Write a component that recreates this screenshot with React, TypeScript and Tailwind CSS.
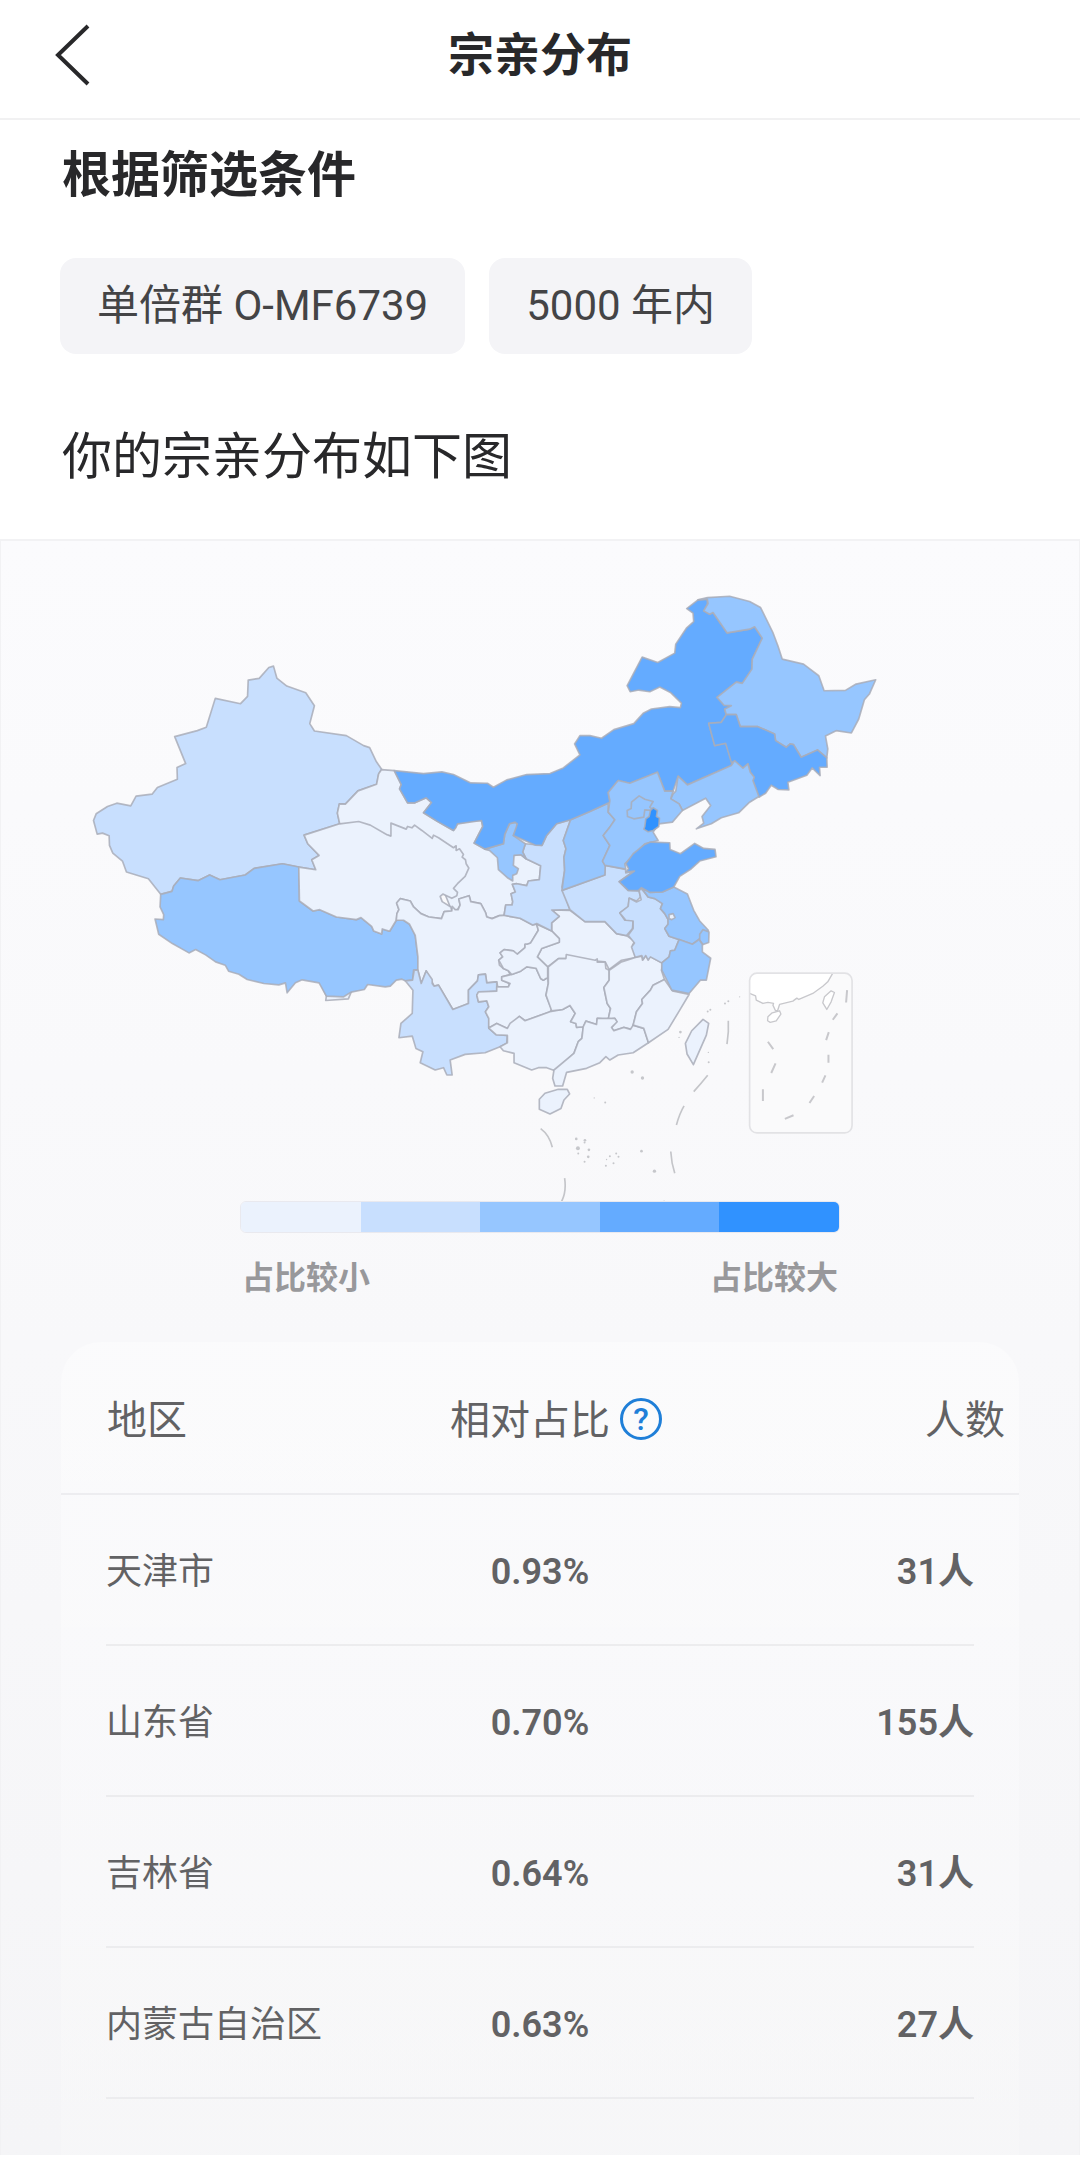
type Region = { name: string; fill: string; d: string };

const TINTS = ["#ebf2fd", "#c8dffe", "#96c6ff", "#64abff", "#3092ff"];

const WEST: Region[] = [
  {
    name: "新疆",
    fill: TINTS[1],
    d: "M38 510L46 490 80 468 108 458 150 466 166 437 214 431 230 411 290 386 289 351 315 339 282 258 350 240 377 230 404 143 480 159 501 137 503 88 536 83 565 50 579 46 589 82 619 106 676 126 702 165 688 219 702 241 798 255 850 285 868 291 888 333 904 356 895 370 889 401 833 421 795 461 777 460 771 488 778 520 671 554 682 580 716 615 694 628 706 658 655 650 606 640 521 654 494 674 418 688 387 674 352 691 299 683 279 707 274 723 240 732 203 685 137 665 125 632 96 608 86 585 85 556 65 548 49 551Z",
  },
  { name: "border", fill: TINTS[0], d: "M720 1000L738 1038 736 1051 804 1046 815 1020Z" },
  {
    name: "西藏",
    fill: TINTS[2],
    d: "M240 732L274 723 279 707 299 683 352 691 387 674 418 688 494 674 521 654 606 640 655 650 657 752 698 782 718 778 768 800 828 808 842 802 874 828 880 842 904 851 906 836 928 843 948 810 970 810 988 822 1005 855 1013 920 1015 960 1000 960 997 990 975 992 965 987 948 990 930 1008 915 1010 862 1003 852 1018 812 1026 790 1040 738 1038 716 998 665 989 645 998 620 1028 615 998 595 1004 550 1000 500 988 475 972 444 963 434 945 405 935 375 914 345 898 325 908 275 880 234 852 223 806 248 808 249 793 238 770Z",
  },
];

const CENTRE: Region[] = [
  {
    name: "甘肃",
    fill: TINTS[0],
    d: "M-92 250L-99 218 -93 190 -75 191 -37 151 19 131 25 100 34 87 72 90 93 132 88 145 112 187 134 187 168 172 184 186 160 217 200 242 250 270 262 250 300 243 334 240 338 258 312 308 344 326 360 328 430 345 453 343 468 355 512 376 508 418 475 422 470 436 440 430 427 432 436 455 423 460 428 484 426 494 407 494 402 525 388 526 366 535 350 530 346 516 332 490 302 484 297 466 266 476 270 494 262 508 245 512 200 400 62 287Z",
  },
  {
    name: "青海",
    fill: TINTS[0],
    d: "M-92 250L-199 284 -188 310 -154 345 -176 358 -164 388 -215 380 -213 482 -172 512 -152 508 -102 530 -42 538 -28 532 4 558 10 572 34 581 36 566 58 573 78 540 80 520 86 508 79 488 90 475 120 482 130 500 152 520 176 530 214 535 222 514 245 512 242 500 216 484 210 468 218 461 245 474 260 466 262 456 250 444 262 430 285 408 296 383 288 370 286 358 276 350 280 342 268 325 258 330 258 316 250 322 205 292 190 284 186 294 155 270 133 254 125 262 112 258 108 266 62 248 62 287 50 283 0 254 -35 243Z",
  },
  {
    name: "四川",
    fill: TINTS[0],
    d: "M78 540L80 520 86 508 79 488 90 475 120 482 130 500 152 520 176 530 214 535 222 514 245 512 246 498 255 508 264 508 270 494 266 476 297 466 302 484 332 490 346 516 350 530 366 535 388 526 402 525 450 534 488 554 500 552 505 570 482 608 472 612 465 612 465 622 442 642 435 640 430 632 402 628 390 638 398 650 386 660 388 675 400 685 415 692 420 703 395 710 395 720 418 730 415 740 383 740 380 725 350 728 346 702 325 704 322 722 295 750 295 790 248 808 205 735 192 738 168 692 153 730 143 690 143 650 135 585 118 552 100 540Z",
  },
  {
    name: "云南",
    fill: TINTS[1],
    d: "M105 722L127 720 132 690 143 690 153 730 168 692 186 718 186 730 192 738 205 735 248 808 295 790 295 750 322 722 325 704 346 702 350 728 380 725 380 753 325 758 320 765 325 785 350 782 356 800 346 815 356 835 356 864 378 884 412 886 410 910 390 920 345 938 285 943 240 960 246 1005 230 1005 220 983 195 990 150 968 158 935 137 925 126 888 86 893 92 850 126 820 128 750Z",
  },
  {
    name: "贵州",
    fill: TINTS[0],
    d: "M425 703L452 693 470 680 498 684 512 715 520 720 533 712 535 730 528 765 545 808 540 815 465 842 448 829 412 865 380 850 356 864 356 835 346 815 356 800 350 782 325 785 320 765 325 755 380 753 380 740 415 740 420 730 395 720 395 710Z",
  },
  {
    name: "广西",
    fill: TINTS[0],
    d: "M356 864L380 850 412 865 420 850 448 829 465 842 540 815 578 808 600 796 616 820 602 845 618 850 620 862 640 860 636 895 625 905 612 940 555 992 530 983 505 983 485 990 432 968 432 940 400 932 390 920 412 908 412 886 378 884Z",
  },
  {
    name: "湖北",
    fill: TINTS[0],
    d: "M545 509L600 510 645 544 705 544 740 580 770 586 795 603 788 615 797 652 755 660 718 688 706 665 590 655 565 655 533 680 502 650 515 625 568 606 568 595 545 572 545 548 568 528Z",
  },
  {
    name: "重庆",
    fill: TINTS[0],
    d: "M500 552L545 572 568 595 568 606 515 625 502 650 533 680 533 712 520 720 512 715 498 684 470 680 452 693 425 703 415 692 400 685 386 660 398 650 390 638 402 628 430 632 442 642 465 622 465 612 472 612 482 608 505 570Z",
  },
  {
    name: "湖南",
    fill: TINTS[0],
    d: "M535 680L566 655 588 655 589 643 676 660 682 656 682 666 706 666 708 685 718 690 718 720 702 742 712 790 722 805 715 838 682 835 680 853 648 843 640 860 620 862 618 850 602 845 616 820 600 796 578 808 545 812 528 765 535 730Z",
  },
  {
    name: "江西",
    fill: TINTS[0],
    d: "M718 690L755 665 797 652 816 648 818 660 828 645 834 656 842 650 880 670 875 690 884 718 850 735 842 750 816 778 818 790 800 815 788 862 782 867 760 862 730 872 725 862 740 845 735 835 715 838 722 805 712 790 702 742 718 720Z",
  },
  {
    name: "广东",
    fill: TINTS[0],
    d: "M640 860L648 843 680 853 682 835 735 835 742 845 725 862 732 872 762 862 782 868 790 855 822 865 836 908 790 938 745 945 720 960 708 950 690 968 650 985 590 997 578 1038 555 1038 548 1015 552 990 612 940 625 905 636 895Z",
  },
  {
    name: "福建",
    fill: TINTS[0],
    d: "M884 718L908 752 958 763 930 810 895 868 836 908 822 865 790 855 800 815 818 790 816 778 842 750 850 735Z",
  },
  {
    name: "陕西",
    fill: TINTS[1],
    d: "M602 238L580 300 588 325 582 350 584 390 576 440 600 508 545 509 568 528 545 548 545 572 500 550 488 554 450 534 402 525 407 494 426 494 428 484 423 460 436 455 427 432 440 430 470 436 475 422 508 418 512 376 468 355 458 335 466 310 516 315 530 285 560 250Z",
  },
  {
    name: "河南",
    fill: TINTS[1],
    d: "M706 375L767 387 768 398 795 390 748 424 775 450 808 452 812 470 800 482 778 474 775 500 750 518 765 540 790 540 788 565 770 586 740 580 705 544 645 544 600 508 576 450 705 404Z",
  },
  {
    name: "山西",
    fill: TINTS[2],
    d: "M602 238L660 213 715 188 715 215 735 238 720 260 700 285 720 315 698 362 706 375 705 404 576 450 584 390 582 350 588 325 580 300Z",
  },
  {
    name: "宁夏",
    fill: TINTS[2],
    d: "M344 326L400 310 404 282 418 250 440 246 442 260 430 285 466 310 458 335 468 355 453 343 432 345 430 375 445 385 440 400 428 405 428 422 412 412 385 388 382 352 358 330Z",
  },
  {
    name: "内蒙古",
    fill: TINTS[3],
    d: "M72 90L160 99 215 94 250 102 302 127 352 128 370 140 410 118 470 102 540 99 580 82 630 43 614 10 630 -15 660 -15 695 -7 732 -33 792 -51 820 -82 845 -95 900 -102 932 -99 935 -113 902 -145 870 -161 840 -147 807 -152 781 -147 772 -165 817 -251 864 -235 915 -263 918 -290 950 -338 972 -358 970 -383 951 -397 985 -423 1013 -425 1013 -410 1002 -390 1020 -380 1030 -385 1072 -324 1140 -335 1155 -342 1178 -308 1148 -245 1147 -215 1118 -172 1100 -176 1042 -130 1070 -108 1090 -100 1065 -95 1070 -78 1055 -55 1017 -52 1035 15 1068 8 1088 65 1085 75 953 133 925 107 910 152 885 152 863 95 780 128 745 120 715 156 720 185 660 213 602 238 560 250 530 285 516 315 495 314 430 285 442 250 435 245 418 250 404 282 400 310 344 326 312 308 338 258 334 240 262 250 257 262 250 270 200 242 160 217 184 186 168 172 134 187 112 187 88 145 93 132Z",
  },
];

const NORTHEAST: Region[] = [
  {
    name: "黑龙江",
    fill: TINTS[2],
    d: "M325 57L353 50 420 46 480 62 513 80 550 155 565 195 578 235 642 250 688 285 704 330 768 329 800 310 859 297 840 340 825 357 808 415 786 457 740 450 708 466 715 505 712 532 684 508 635 530 612 492 602 490 590 500 558 480 555 460 505 438 452 438 440 402 410 402 405 385 425 375 403 374 382 350 440 304 458 308 487 265 488 235 518 172 495 138 480 145 412 156 370 95 360 100 342 90 355 68 353 55Z",
  },
  {
    name: "吉林",
    fill: TINTS[3],
    d: "M410 402L440 402 452 438 505 438 555 460 558 480 590 500 602 490 612 492 635 530 684 508 712 532 713 560 690 560 692 585 668 562 652 584 595 605 598 628 566 627 545 614 528 638 508 650 490 600 494 590 482 575 475 550 460 563 435 542 425 545 408 488 375 495 357 428 395 425Z",
  },
  {
    name: "辽宁",
    fill: TINTS[2],
    d: "M435 540L460 563 475 550 482 575 494 590 490 600 508 648 480 665 447 697 395 712 365 730 320 745 342 728 337 708 363 675 348 653 278 690 268 670 243 655 250 640 258 632 265 587 293 613 425 555Z",
  },
  {
    name: "河北",
    fill: TINTS[2],
    d: "M203 575L225 632 250 632 243 655 268 670 278 690 248 725 207 730 190 755 205 780 165 790 105 850 108 866 45 855 38 842 60 795 40 765 60 740 75 718 55 695 60 660 55 636 85 600 120 608Z",
  },
  { name: "北京", fill: TINTS[2], d: "M113 708L112 690 124 684 125 665 148 646 165 656 190 663 180 680 192 690 165 688 162 710 132 715Z" },
  { name: "天津", fill: TINTS[4], d: "M182 690L190 682 203 690 200 708 209 713 207 738 190 750 175 754 162 746 165 738 168 715 178 708Z" },
];

const EAST: Region[] = [
  {
    name: "安徽",
    fill: TINTS[1],
    d: "M313 275L325 290 345 295 368 310 362 325 375 340 385 358 385 372 375 385 388 408 418 418 405 450 392 452 388 470 366 488 332 470 325 480 318 466 310 478 306 466 286 471 275 440 284 428 265 405 280 385 280 362 258 360 240 338 265 318 268 293 290 305 304 298 298 272 303 264Z",
  },
  {
    name: "江苏",
    fill: TINTS[2],
    d: "M402 260L443 281 462 330 480 362 506 390 500 415 480 415 458 432 418 418 388 408 375 385 385 372 385 358 375 340 362 325 368 310 345 295 325 290 305 262 330 276 368 275Z",
  },
  { name: "lake", fill: TINTS[0], d: "M388 343L400 340 406 352 396 358 388 355Z" },
  { name: "上海", fill: TINTS[2], d: "M480 402L490 388 508 395 507 427 490 433 480 420Z" },
  {
    name: "浙江",
    fill: TINTS[2],
    d: "M418 418L458 432 478 418 488 433 488 455 513 474 500 540 482 540 448 580 396 570 366 510 366 488 388 470 392 452 405 450Z",
  },
  {
    name: "山东",
    fill: TINTS[3],
    d: "M332 125L390 127 391 147 422 160 465 129 492 144 526 147 529 169 480 182 455 205 420 228 402 260 368 275 330 276 305 262 295 271 265 270 238 244 284 212 258 215 266 205 258 190 280 160 315 132Z",
  },
];

const ISLANDS: Region[] = [
  { name: "台湾", fill: TINTS[0], d: "M670 358L687 370 680 405 641 494 622 462 617 430 636 392Z" },
  { name: "海南", fill: TINTS[0], d: "M235 568L262 568 269 582 252 600 243 626 210 642 178 628 178 598 195 580Z" },
];

const GROUPS: { at: string; regions: Region[] }[] = [
  { at: "translate(80 650) scale(0.33333)", regions: WEST },
  { at: "translate(370 740) scale(0.33333)", regions: CENTRE },
  { at: "translate(590 580) scale(0.33333)", regions: NORTHEAST },
  { at: "translate(540 800) scale(0.33333)", regions: EAST },
  { at: "translate(480 900) scale(0.33333)", regions: ISLANDS },
];

const ISLETS = [
  [229, 237, 4], [255, 241, 4], [254, 248, 3], [234, 265, 6], [267, 270, 4], [235, 281, 3], [265, 291, 4],
  [254, 306, 3], [330, 289, 3], [349, 281, 3], [356, 291, 3], [320, 299, 2], [341, 310, 3], [318, 318, 3],
  [425, 274, 4], [464, 334, 5], [283, 114, 2], [316, 128, 3], [397, 36, 5], [428, 54, 5], [493, 425, 3],
  [624, -146, 3], [632, -151, 3], [676, -170, 3], [686, -177, 3], [720, -190, 2], [542, -84, 4], [538, -68, 2],
  [626, -23, 2], [627, 7, 3],
];

function ChinaMap() {
  return (
    <svg viewBox="0 540 1080 661" className="block h-auto w-full" role="img" aria-label="宗亲分布">
      {GROUPS.map((g) => (
        <g key={g.at} transform={g.at} stroke="#a9adb9" strokeOpacity="0.85" strokeWidth="5" strokeLinejoin="round">
          {g.regions.map((r) => (
            <path key={r.name} d={r.d} fill={r.fill} />
          ))}
        </g>
      ))}
      <g transform="translate(500 1060) scale(0.33333)">
        <g fill="#c6c7cb">
          {ISLETS.map(([x, y, r]) => (
            <circle key={`${x}-${y}`} cx={x} cy={y} r={r} />
          ))}
        </g>
        <path
          d="M686 -118V-85L682 -48M624 46Q605 70 582 95M553 138Q540 160 530 195M122 206Q148 225 157 262M194 355Q200 395 185 425M513 275Q515 310 525 340"
          fill="none"
          stroke="#c4c5c9"
          strokeWidth="5"
        />
      </g>
      <g transform="translate(680 950) scale(0.33333)" strokeLinejoin="round">
        <rect x="210" y="69" width="308" height="480" rx="22" fill="#fafafb" />
        <g fill="#ffffff" stroke="#c8c8cc" strokeWidth="4">
          <path
            stroke="none"
            d="M210 130L228 137 230 150 250 160 282 160 280 165 288 182 294 182 300 163 340 153 352 144 362 146 400 130 430 108 460 69H232Q210 69 210 91Z"
          />
          <path
            fill="none"
            d="M210 130L228 137 230 150 250 160 265 157 282 160 280 165 288 182 294 182 300 163 340 153 352 144 358 148 400 130 430 108 445 95 460 69"
          />
          <path d="M265 200L278 188 300 182 304 192 290 212 272 217 264 212Z" />
          <path d="M455 122L465 127 455 155 442 178 430 158 435 140Z" />
        </g>
        <rect x="210" y="69" width="308" height="480" rx="22" fill="none" stroke="#e2e2e5" strokeWidth="5" />
        <path
          d="M503 120L500 157M474 190L460 209M448 246L440 270M447 314V338M438 376L428 398M404 438L390 459M342 496L316 507M265 275L281 297M288 340L275 369M250 418V453"
          fill="none"
          stroke="#c8c8cc"
          strokeWidth="6"
        />
      </g>
    </svg>
  );
}

const ROWS = [
  { area: "天津市", share: "0.93%", people: "31人" },
  { area: "山东省", share: "0.70%", people: "155人" },
  { area: "吉林省", share: "0.64%", people: "31人" },
  { area: "内蒙古自治区", share: "0.63%", people: "27人" },
];

export default function App() {
  return (
    <div className="bg-white pb-7 font-[Roboto,'Noto_Sans_CJK_SC',sans-serif] text-[#28282a]">
      <header className="grid h-[120px] grid-cols-[1fr_auto_1fr] items-center border-b-2 border-[#f1f1f2] px-[54px] pb-2">
        <button type="button" aria-label="返回" className="justify-self-start">
          <svg viewBox="0 0 36 62" className="h-[62px] w-9" fill="none" stroke="#28282a" strokeWidth="4">
            <path d="M34 2 4 31 34 60" />
          </svg>
        </button>
        <h1 className="text-[46px] leading-[60px] font-bold">宗亲分布</h1>
      </header>

      <section className="px-[60px] pt-[26px] pb-[52px]">
        <h2 className="px-0.5 text-[49px] leading-[60px] font-bold">根据筛选条件</h2>
        <div className="mt-[52px] flex gap-6 text-[42px] leading-[60px] text-[#444446]">
          <span className="rounded-2xl bg-[#f4f4f7] px-[37px] py-[18px]">单倍群 O-MF6739</span>
          <span className="rounded-2xl bg-[#f4f4f7] px-[37px] py-[18px]">5000 年内</span>
        </div>
        <p className="mt-[73px] px-0.5 text-[50px] leading-[60px]">你的宗亲分布如下图</p>
      </section>

      <section className="border-x border-t-2 border-[#f2f2f4] bg-linear-to-b from-[#fbfbfd] to-[#f5f5f7]">
        <ChinaMap />

        <div className="mx-auto w-[600px] max-w-full">
          <div className="flex h-8 overflow-hidden rounded-md border border-[#8080a020]">
            <span className="flex-1 bg-[#ebf2fd]" />
            <span className="flex-1 bg-[#c8dffe]" />
            <span className="flex-1 bg-[#96c6ff]" />
            <span className="flex-1 bg-[#64abff]" />
            <span className="flex-1 bg-[#3092ff]" />
          </div>
          <div className="mt-[21px] flex justify-between px-0.5 text-[32px] leading-[48px] font-bold text-[#98989b]">
            <span>占比较小</span>
            <span>占比较大</span>
          </div>
        </div>

        <div className="mx-[60px] mt-10 rounded-t-[40px] bg-linear-to-b from-white/40 to-white/15 pb-14">
          <table className="block w-full text-[#626264]">
            <thead className="block">
              <tr className="grid h-[153px] grid-cols-3 items-center border-b-2 border-[#ededf0] pt-2 pr-3.5 pl-[46px] text-[40px] leading-[60px]">
                <th className="text-left font-normal">地区</th>
                <th className="flex items-center justify-center gap-2.5 font-normal whitespace-nowrap">
                  相对占比
                  <button
                    type="button"
                    aria-label="相对占比说明"
                    className="mb-1 flex size-[42px] items-center justify-center rounded-full border-[3px] border-[#1f7fd8] text-[32px] leading-none font-medium text-[#1f7fd8]"
                  >
                    ?
                  </button>
                </th>
                <th className="text-right font-normal">人数</th>
              </tr>
            </thead>
            <tbody className="block px-[45px] text-[36px] leading-[54px]">
              {ROWS.map((r) => (
                <tr key={r.area} className="grid h-[151px] grid-cols-3 items-center border-b-2 border-[#ececee] pt-1.5">
                  <td>{r.area}</td>
                  <td className="text-center font-semibold">{r.share}</td>
                  <td className="text-right font-semibold">{r.people}</td>
                </tr>
              ))}
            </tbody>
          </table>
        </div>
      </section>
    </div>
  );
}
